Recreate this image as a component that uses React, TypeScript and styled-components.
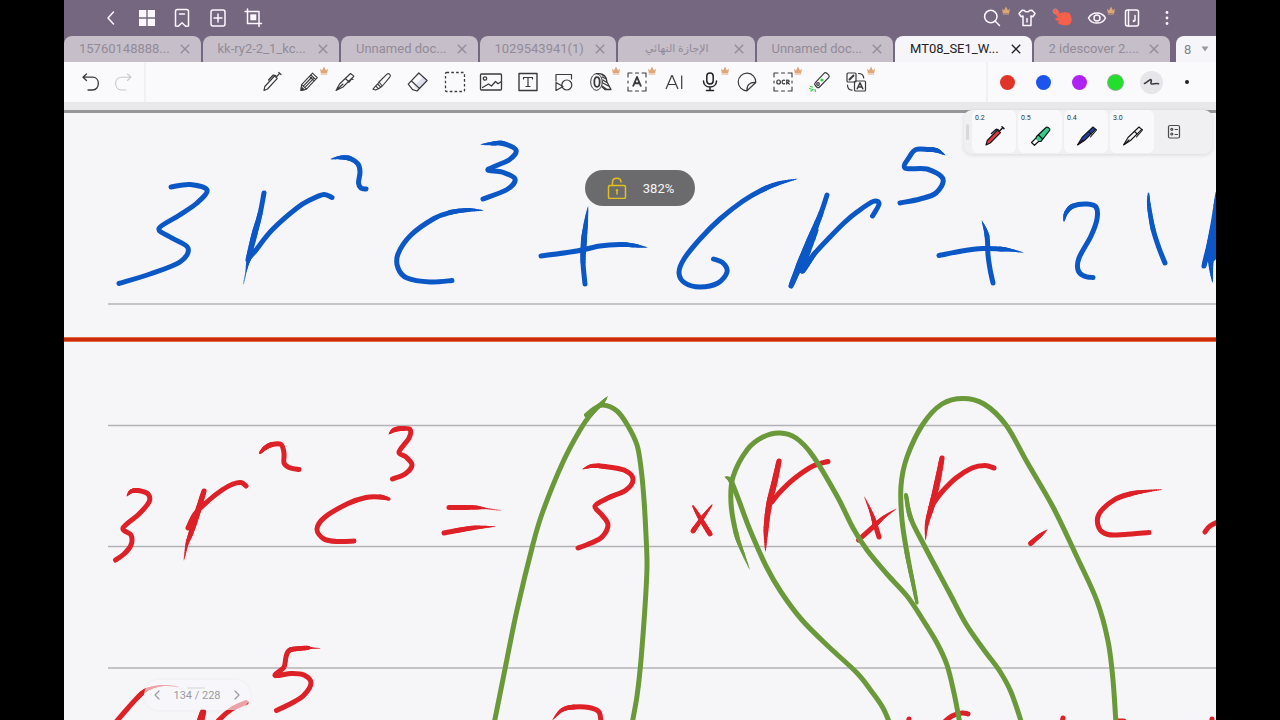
import React from "react";
import styled, { createGlobalStyle } from "styled-components";

const GlobalStyle = createGlobalStyle`
  * { box-sizing: border-box; }
  body { margin: 0; background: #000; font-family: Roboto, "DejaVu Sans", sans-serif; }
  button { border: 0; padding: 0; margin: 0; background: none; font: inherit; color: inherit; cursor: pointer; }
`;

const Shell = styled.main`
  display: flex;
  flex-direction: column;
  height: 100vh;
  margin: 0 5%;
  overflow: hidden;
  background: #f6f6f9;
`;

const TitleBar = styled.header`
  flex: none;
  display: flex;
  justify-content: space-between;
  align-items: center;
  height: 36px;
  padding: 0 33px 0 31px;
  background: #74677f;
  color: #fdf8ff;
`;

const TitleGroup = styled.div<{ $width: number }>`
  display: flex;
  justify-content: space-between;
  width: ${(p) => p.$width}px;
`;

const IconButton = styled.button<{ $tall?: boolean }>`
  position: relative;
  display: flex;
  align-items: center;
  justify-content: center;
  width: 32px;
  height: ${(p) => (p.$tall ? 40 : 36)}px;
`;

const CrownBadge = styled.span<{ $x: number; $y: number }>`
  position: absolute;
  left: ${(p) => p.$x}px;
  top: ${(p) => p.$y}px;
  display: flex;
`;

const TabBar = styled.nav`
  flex: none;
  display: flex;
  gap: 2px;
  height: 26px;
  background: #74677f;
`;

const Tab = styled.div<{ $active?: boolean }>`
  flex: 1 1 0;
  min-width: 0;
  display: flex;
  align-items: center;
  justify-content: space-between;
  padding: 0 10px 0 15px;
  border-radius: 8px 8px 0 0;
  background: ${(p) => (p.$active ? "#f6f5f9" : "#c6bec9")};
  color: ${(p) => (p.$active ? "#222224" : "#938b98")};
`;

const TabTitle = styled.button<{ $small?: boolean }>`
  flex: 1;
  min-width: 0;
  overflow: hidden;
  white-space: nowrap;
  padding-right: ${(p) => (p.$small ? 12 : 0)}px;
  text-align: ${(p) => (p.$small ? "center" : "left")};
  font-size: ${(p) => (p.$small ? 11 : 13)}px;
  line-height: 26px;
`;

const TabClose = styled.button`
  display: flex;
  width: 12px;
  justify-content: center;
`;

const TabCount = styled.button`
  flex: none;
  display: flex;
  align-items: center;
  justify-content: space-between;
  width: 40px;
  margin-left: 4px;
  padding: 0 7px 0 8px;
  border-radius: 8px 0 0 0;
  background: #f6f5f9;
  color: #85838a;
  font-size: 13px;
`;

const Toolbar = styled.div`
  flex: none;
  display: flex;
  height: 40px;
  background: #fafafc;
  color: #3a3a3e;
`;

const History = styled.div`
  display: flex;
  width: 82px;
  padding-left: 11px;
  border-right: 2px solid #f1f1f4;
`;

const Tools = styled.div`
  flex: 1;
  display: flex;
  justify-content: center;
  padding-right: 4px;
`;

const ToolRow = styled.div`
  display: flex;
  justify-content: space-between;
  width: 616px;
`;

const Swatches = styled.div`
  display: flex;
  align-items: center;
  width: 230px;
  padding-left: 1px;
  border-left: 2px solid #f1f1f4;
`;

const SwatchButton = styled.button`
  display: flex;
  align-items: center;
  justify-content: center;
  width: 36px;
  height: 40px;
`;

const Dot = styled.span<{ $color: string; $size?: number; $ring?: string }>`
  width: ${(p) => p.$size ?? 15}px;
  height: ${(p) => p.$size ?? 15}px;
  border-radius: 50%;
  background: ${(p) => p.$color};
  box-shadow: 0 0 0 1px ${(p) => p.$ring ?? "transparent"};
`;

const Squiggle = styled.span`
  display: flex;
  width: 23px;
  height: 23px;
  border-radius: 50%;
  background: #e6e6ea;
`;

const Edge = styled.div`
  flex: none;
  height: 11px;
  border-bottom: 3px solid #96969a;
  background: #e8e8eb;
`;

const Canvas = styled.section`
  position: relative;
  flex: 1;
  min-height: 0;
  overflow: visible;
`;

const Page = styled.svg`
  display: block;
  width: 100%;
`;

const Favorites = styled.div`
  position: absolute;
  top: -3px;
  right: 4px;
  z-index: 1;
  display: flex;
  gap: 2px;
  width: 248px;
  height: 44px;
  padding-left: 8px;
  border-radius: 8px;
  background: #f0f0f3;
  box-shadow: 0 1px 4px rgba(0, 0, 0, 0.12);
`;

const Grip = styled.span`
  position: absolute;
  left: 2px;
  top: 14px;
  width: 3px;
  height: 16px;
  border-radius: 2px;
  background: #d8d8dc;
`;

const PenCard = styled.button`
  display: flex;
  flex-direction: column;
  width: 44px;
  height: 43px;
  padding: 4px 0 0 3px;
  border-radius: 6px;
  background: #f9f9fb;
  color: #333;
  text-align: left;
  font-size: 7px;
  line-height: 8px;

  svg { align-self: center; margin-top: 2px; margin-right: 2px; }
`;

const ListButton = styled.button`
  display: flex;
  align-items: center;
  justify-content: center;
  width: 36px;
  height: 44px;
`;

const ZoomPill = styled.div`
  position: absolute;
  top: 57px;
  left: 50%;
  display: flex;
  align-items: center;
  justify-content: center;
  gap: 15px;
  width: 110px;
  height: 36px;
  margin-left: -55px;
  border-radius: 18px;
  background: #6b6b6d;
  color: #f6f6f6;
  font-size: 13px;
`;

const Pager = styled.div`
  position: absolute;
  left: 80px;
  bottom: 10px;
  display: flex;
  align-items: center;
  justify-content: space-between;
  width: 106px;
  height: 30px;
  padding: 0 6px;
  border-radius: 15px;
  background: rgba(248, 248, 251, 0.6);
  box-shadow: 0 0 4px rgba(0, 0, 0, 0.05);
  color: #9a9a9f;
  font-size: 11px;

  &::before {
    content: "";
    position: absolute;
    top: 7px;
    left: 43px;
    width: 18px;
    height: 2px;
    border-radius: 1px;
    background: #e6e6ea;
  }
  button { display: flex; }
`;

type IconProps = { children: React.ReactNode; w?: number; size?: number; color?: string };
const Icon = ({ children, w = 1.3, size = 24, color = "currentColor" }: IconProps) => (
  <svg width={size} height={size} viewBox={`0 0 ${size} ${size}`} fill="none" stroke={color} strokeWidth={w} strokeLinecap="round" strokeLinejoin="round" aria-hidden="true">
    {children}
  </svg>
);

const Crown = () => (
  <svg width="10" height="9" viewBox="0 0 10 9" aria-hidden="true">
    <path d="M1 2.6 3 4.4 5 .6 7 4.4 9 2.6 8.2 7H1.8zM1.8 7.6h6.4v.9H1.8z" fill="#dfa677" />
  </svg>
);

const Cross = () => (
  <svg width="10" height="10" viewBox="0 0 10 10" stroke="currentColor" strokeWidth="1.3" aria-hidden="true">
    <path d="M.8.8l8.4 8.4M9.2.8.8 9.2" />
  </svg>
);

type Tool = { label: string; icon: React.ReactNode; crown?: boolean };

const titleLeft: Tool[] = [
  { label: "Back", icon: <Icon w={1.5}><path d="M14.5 6 9 12l5.5 6" /></Icon> },
  { label: "Thumbnails", icon: <Icon w={0}><path fill="currentColor" d="M4 4h7.300v7.300H4zM12.700 4H20v7.300h-7.300zM4 12.700h7.300V20H4zM12.700 12.700H20V20h-7.300z" /></Icon> },
  { label: "Bookmarks", icon: <Icon w={1.5}><path d="M5.500 5.500a2 2 0 0 1 2-2h9a2 2 0 0 1 2 2V20l-2.800.2-3.700-3.500-3.700 3.500-2.800-.2zM9.500 8h5" /></Icon> },
  { label: "Add page", icon: <Icon w={1.5}><rect x="5" y="4" width="14" height="16" rx="2" /><path d="M12 8v8M8 12h8" /></Icon> },
  { label: "Crop", icon: <Icon w={1.5}><path d="M4 5.500h14v15M6.500 3v14.500h14" /><path fill="currentColor" stroke="none" d="M9.300 8.300h6v6h-6z" /></Icon> },
];

const titleRight: Tool[] = [
  { label: "Search", crown: true, icon: <Icon w={1.5}><circle cx="10.800" cy="10.500" r="6.200" /><path d="m15.300 15.300 4.200 4.200" /></Icon> },
  { label: "Theme", icon: <Icon w={1.5}><path d="M9.500 4.500 7 4.300 4 7.500l2 3.200 2-.7v9.500h8V10l2 .7 2-3.200-3-3.200-2.500.2c-.6 1.800-4.400 1.800-5 0zM12 12.500v3.500" /></Icon> },
  { label: "Touch mode", icon: <Icon w={0}><path fill="#f5604c" d="M3.800 6.800C2.800 5.200 4.200 3 6.200 3.400c.9.200 1.500.8 2 1.500l1.900 2.600c1-1.200 2.400-1.200 3.300-.8 1-.9 2.400-.8 3.300 0 1.300-.4 2.600.1 3.200 1.300 1.200 1.900 1.900 4 1.700 6.200-.2 2.700-1.700 4.700-4.400 5-3 .4-6-.2-8.500-1.400-1.300-.7-.9-2.400.6-2.400-1.400-.2-2.800-.6-3.600-1.300-1-.9-.2-2.400 1.100-2.200l1.500.2z" /><circle cx="5.400" cy="5.200" r="2.300" fill="none" stroke="#d08a8c" strokeWidth=".9" /></Icon> },
  { label: "View", crown: true, icon: <Icon w={1.5}><path d="M3.500 12c3.400-6.800 13.600-6.800 17 0-3.400 6.800-13.600 6.800-17 0z" /><circle cx="12" cy="12" r="3" /></Icon> },
  { label: "Music sheet", icon: <Icon w={1.5}><rect x="5.500" y="4" width="13" height="16" rx="2" /><path d="M8.500 4v16M15 9.500v5" /><circle cx="13.800" cy="15" r="1.200" fill="currentColor" stroke="none" /></Icon> },
  { label: "More", icon: <Icon w={0}><g fill="currentColor"><circle cx="12" cy="6.500" r="1.400" /><circle cx="12" cy="12" r="1.400" /><circle cx="12" cy="17.500" r="1.400" /></g></Icon> },
];

const Corners = () => <path d="M3 7V3h4M17 3h4v4M21 17v4h-4M7 21H3v-4M10.500 3h3M10.500 21h3M3 11v2M21 11v2" strokeWidth="1.100" />;

const tools: Tool[] = [
  { label: "Ballpoint", icon: <Icon w={1.200}><path d="M4 20.500 4.800 16.500 14.500 6l2.800 2.400L7.500 19zM16.200 7l3-3.200M18.800 2.500l2.200 2M8.500 10l4.700-5 2.600.5" /></Icon> },
  { label: "Pencil", crown: true, icon: <Icon w={1.100}><path d="m4 20.500.6-5.800L15.500 3.200l4.800 4.500L9.500 19.200zM13.800 5l4.800 4.500M12.500 6.300l4.800 4.500M4.600 14.700l4.900 4.500M6.300 16.200l8.300-8.700M7.800 17.600l8.400-8.700" /><path d="m4 20.500.3-3.500 3 2.800z" fill="currentColor" /></Icon> },
  { label: "Fountain pen", icon: <Icon w={1.100}><path d="m3 20.500 3.500-6.500L17.500 3.500l3.400 2.600L10 17zM4 19.500l6-5.500M12.300 8.500l3.400 3M20.900 6.100l-5 6.400M18.500 9l1.500.5" /></Icon> },
  { label: "Highlighter", icon: <Icon w={1.100}><path d="m9 12 8-7.800c.9-.8 2-.6 2.800.1.700.8.700 1.900 0 2.800L12.300 16zM9 12l-1.300 2 3 3.200 1.600-1.200M7.700 14l-2 1.800 2.800 3 2.200-1.600M5.700 15.800 3 19.200l2.600.9 2.900-1.300" /></Icon> },
  { label: "Eraser", icon: <Icon w={1.200}><path d="m17.500 6.500 4 3.800-9.300 10L8 16z" fill="#dfe0ee" stroke="none" /><path d="m2.200 14.200 10.600-11.200 8.300 7.500-10 10.500-4.500-1.300zM5.500 11l7.900 7.400" /></Icon> },
  { label: "Select", icon: <Icon w={1.300}><rect x="2.500" y="2.500" width="19" height="19" rx="1" strokeDasharray="2.600 2.200" strokeLinecap="butt" /></Icon> },
  { label: "Image", icon: <Icon w={1.300}><rect x="1.500" y="4" width="21" height="16" rx="1" /><circle cx="6" cy="8.500" r="1.700" /><path d="m3.500 17.500 6-3.500 3 2 4-4.500 2.500 2.200 3.500-2.200" /></Icon> },
  { label: "Text box", icon: <Icon w={1.400}><rect x="3" y="3.500" width="18" height="17" /><path d="M7.500 9V7.500h9V9M12 7.500v9M10 16.500h4" strokeWidth="1.200" /></Icon> },
  { label: "Shapes", icon: <Icon w={1.200}><path d="M4 11V4.500h15.500V9M4 12.500v8l7-4z" /><circle cx="14.800" cy="15" r="5" /></Icon> },
  { label: "Tape", crown: true, icon: <Icon w={1}><ellipse cx="7.500" cy="12" rx="5.800" ry="8.300" /><ellipse cx="8" cy="12" rx="2.700" ry="4.800" strokeWidth="1.800" /><path d="M7.500 3.700c7.500-1 10 3 10.500 8.300l4 7.500h-6l-2.500-2.300M12 4l3 2M13.300 7l4 2M13.800 10l4.200 2.500M13.800 13l5.700 3M13 16l5 3.500" strokeWidth="1.300" /></Icon> },
  { label: "Text recognition", crown: true, icon: <Icon><Corners /><path d="m8 16.500 4-9.500 4 9.500M9.400 13.300h5.200" strokeWidth="1.900" strokeLinecap="butt" /></Icon> },
  { label: "AI", icon: <Icon w={1.200}><path d="m4 19 5.800-13.500h.4L16 19M6 14.500h8M19.700 5.500V19" strokeLinecap="butt" /></Icon> },
  { label: "Record", crown: true, icon: <Icon w={1.500} color="#222225"><rect x="8.800" y="3" width="6.400" height="11" rx="3.200" /><path d="M5.500 11c0 8 13 8 13 0M12 17v3.500M8.500 20.500h7" /></Icon> },
  { label: "Sticker", icon: <Icon w={1.200}><path d="M20.800 12.500A8.800 8.800 0 1 0 12 20.800M20.800 12.500 12 20.800c-.5-5.500 2.500-8.800 8.800-8.300z" /></Icon> },
  { label: "OCR", crown: true, icon: <Icon><Corners /><g strokeWidth="1.200"><ellipse cx="7.600" cy="12" rx="1.800" ry="2" /><path d="M13.600 10.400c-3.300-1.200-3.300 4.400 0 3.200M15.700 14.100v-4c3.200-.3 3.200 2.300 0 2.200l2.600 1.800" /></g></Icon> },
  { label: "Laser", icon: <Icon w={1.200}><path d="M7.300 12.700 16 3.300c1-1 2-.6 2.800 0l1.800 1.600c.9.900.8 2 0 2.800L11.500 17c-1 1-2 .8-2.800 0l-1.400-1.500c-.9-.9-.8-2 0-2.800z" /><circle cx="10" cy="14" r="1.300" /><circle cx="14" cy="10" r="1" fill="#35cf45" stroke="#35cf45" /><path d="m2.500 16.500 2 .5M3 21l2-1.800M7 19.500l.5 2M1.500 18.500l1.500.5" stroke="#35cf45" /></Icon> },
  { label: "Translate", crown: true, icon: <Icon w={1.200}><rect x="3" y="3" width="9" height="9" rx="1" /><path d="m5.500 9.500 4-4" strokeWidth="1.900" /><rect x="10.500" y="11" width="11" height="10" rx="1" /><path d="m13.200 18.800 2.800-6 2.800 6M14.200 17h3.600" strokeWidth="1.500" /><path d="M14.500 3.500c3 0 5 1.500 5.200 4.500M3.500 15c0 3 1.500 5 4.500 5.200" /></Icon> },
];

const tabs = ["15760148888...", "kk-ry2-2_1_kc...", "Unnamed doc...", "1029543941(1)", "الإجازة النهائي", "Unnamed doc...", "MT08_SE1_W...", "2 idescover 2...."];

const BallPen = ({ fill }: { fill: string }) => (
  <Icon w={1.200} color="#16161a"><path d="M3 21 4.300 16.500 14.500 6l3 2.700L7.200 19z" fill={fill} /><path d="m16.500 7 3-3M19 2.800l2 1.800M8.500 9.500l4.800-4.200 2 .6" strokeWidth="1.500" /></Icon>
);
const Marker = () => (
  <Icon w={1.200} color="#16161a"><path d="m7.500 12.500 9.500-9c1-1 4.500.6 3.800 2.600L12 17.300l-3.500.2-2-2z" fill="#31cf8a" /><path d="m6.500 14.500-4 4 3 2.800 4-3.800" fill="#fff" /><path d="m9.500 11 4 4" /></Icon>
);
const Nib = ({ fill }: { fill: string }) => (
  <Icon w={1.100} color="#16161a"><path d="m2.500 21 4.500-7.500L18 3l2.800 2.300L9.500 16.500z" fill={fill} /><path d="m3 20.500 5-4.700M20.800 5.300l.7.7-6 7M13.500 7.500l2.800 2.500" /></Icon>
);
const favorites = [
  { size: "0.2", icon: <BallPen fill="#e23b40" /> },
  { size: "0.5", icon: <Marker /> },
  { size: "0.4", icon: <Nib fill="#223f9b" /> },
  { size: "3.0", icon: <Nib fill="#f5f5f7" /> },
];

/* Ink strokes: lists of [x, y, nib width], smoothed through every point. */
type Pt = [number, number, number?];
const NIB = 5;

const blue: Pt[][] = [
  [[171, 187], [190, 184.500], [207, 190], [197, 203], [178, 216], [159, 228.500], [171, 237.500], [188, 248], [180, 262], [150, 274], [119, 283.500]],
  [[264, 193], [260, 214], [254, 236, 6], [248, 260, 5]],
  [[243.500, 284, 0.300], [246, 272, 1], [249, 259, 4], [256, 250], [272, 230], [297, 208], [312, 199], [324, 194.500], [332, 197.500]],
  [[331, 159, 0.300], [341, 157.500, 4], [350, 158.500], [358, 164], [360, 172], [358.500, 183], [361, 188], [366, 189]],
  [[483, 210.500, 0.300], [468, 210, 4], [450, 212.500], [434, 218.500], [411, 235], [398, 254], [398, 268], [407, 278], [430, 282], [452, 280.500]],
  [[481, 144.500, 0.300], [493, 143.500, 4], [503, 143.500], [516, 150], [509, 160], [488, 169.500], [502, 172], [515, 179], [507, 189.500], [483, 199]],
  [[541, 256], [577, 251], [600, 246], [620, 244.500], [634, 245.500, 4], [647, 247.500, 0.300]],
  [[588, 207, 0.300], [586, 222, 4], [584, 240, 6], [583, 262, 5], [585, 284]],
  [[797, 179, 0.300], [778, 183.500, 4], [762, 190], [743, 201], [720, 219], [700, 239], [684, 259], [679, 273], [685, 283], [700, 287], [718, 283], [727, 272], [723, 263], [713.500, 259]],
  [[827, 195], [821, 213], [810, 240, 7], [800, 264, 7], [791, 286, 5]],
  [[816, 230, 5], [802, 270, 6], [815, 253, 5], [830, 237], [845, 222], [857, 212], [873, 201.500], [879, 204], [872.500, 216]],
  [[945, 155, 0.300], [937, 150.500, 4.500], [928, 149.500], [916, 149.500], [910, 156], [905, 168], [927, 169], [943, 179], [936, 193], [920, 199], [900, 203]],
  [[939, 255.500], [962, 251], [983, 248.500], [1000, 249], [1010, 250, 3], [1023, 252.500, 0.300]],
  [[982, 221, 0.300], [987, 236, 5], [988, 255], [990, 269], [993, 283]],
  [[1064, 221, 1], [1066, 213, 4], [1073, 206], [1087, 204], [1096, 207], [1097, 219], [1091, 236], [1079, 258], [1078, 270], [1084, 276], [1093, 277.500]],
  [[1148.500, 193, 1], [1149, 206, 4], [1153, 229], [1159, 248], [1165, 263]],
  [[1217, 193, 3], [1212, 232, 6], [1204, 266, 5]],
  [[1217, 226, 6], [1211, 258, 6], [1212.500, 282, 0.500]],
  [[1218, 236, 8], [1213, 258, 6]],
];

const red: Pt[][] = [
  [[127, 496, 0.500], [131, 491.500, 4], [138, 490.500], [148, 494], [149, 502], [139, 514], [123, 528], [131, 535], [131, 545], [124, 554], [115.500, 560]],
  [[204, 491], [197, 514, 6], [191, 533, 5], [187, 544, 3], [184, 560, 0.300]],
  [[188, 528], [195, 514], [208, 501], [222, 490], [233, 484], [241, 482.500], [246, 486]],
  [[260, 453, 2], [265, 448, 4.500], [272, 444.500], [281, 444.500], [284, 453], [284, 463], [289, 467.500], [299, 469.500]],
  [[389, 434, 0.500], [394, 430, 4.500], [402, 428.500], [410, 429.500], [409, 438], [399, 452], [406, 457], [412, 465], [405, 474], [392.500, 479]],
  [[389, 499, 3], [380, 497, 5], [366, 497.500], [348, 503.500], [325, 517], [317, 529], [324, 539], [338, 541.500], [354, 541]],
  [[449, 507.500], [462, 507.500], [476, 507.500, 4], [486, 508.500, 1.200], [501, 510.500, 0.200]],
  [[444, 533], [457, 530.500], [472, 528, 4.500], [484, 527, 2.500], [495, 526.500, 0.300]],
  [[320, 648.500, 0.300], [311, 648, 1.500], [306, 648, 4.500], [290, 650], [286, 657], [284, 667], [275, 675.500], [291, 673.500], [304, 675], [311, 683], [304, 695], [292, 703], [276.500, 710.500]],
  [[179, 687, 0.300], [164, 685.500, 1], [148, 689, 3], [139, 696, 5], [128, 708], [116, 722]],
  [[203, 712, 6], [199, 726, 8]],
  [[246, 702.500], [232, 709], [219, 720], [212, 730]],
  [[583, 469, 0.500], [592, 466, 4], [605, 466.500], [624, 470], [633, 479], [626, 490], [608, 498], [595, 506], [602, 515], [608, 525], [602, 537], [591, 543], [578, 548]],
  [[693, 506, 1.500], [700, 518, 4.500], [710, 534]],
  [[712, 505, 1], [703, 517, 4], [693, 531]],
  [[779, 461], [775, 480, 6], [769, 505, 6], [766, 530, 5], [765.500, 551, 0.300]],
  [[772, 502], [780, 492], [795, 478], [813, 466], [828, 461.500]],
  [[552.500, 720, 0.300], [562, 710, 4], [574, 707], [589, 707.500], [599, 712], [601, 724]],
  [[864.500, 497, 0.300], [871, 512, 3], [875, 524, 5], [879, 537]],
  [[896, 509, 0.300], [884, 517, 3], [874, 526, 5], [858.500, 540]],
  [[942, 458], [938, 479, 6], [932, 505, 6], [927, 523, 4], [925.500, 540, 0.300]],
  [[931, 507], [941, 493], [956, 478], [972, 468], [985, 465.500], [994, 468]],
  [[1030.500, 543.500], [1040, 535.500, 4], [1047, 530, 0.300]],
  [[1162, 489.500, 0.300], [1144, 491.500, 3], [1130, 494, 5], [1114, 500], [1099, 514], [1099, 528], [1108, 534.500], [1125, 534.500], [1149, 532.500]],
  [[1205, 532], [1210, 526], [1220, 521]],
  [[909, 719], [907, 728]],
  [[942, 724], [952, 716], [962, 713], [968, 714]],
  [[1063, 718], [1061, 728]],
  [[1117, 721], [1124, 721]],
  [[1212, 719], [1211, 728]],
];

const green: Pt[][] = [
  [[586.500, 415], [594, 409], [603, 405], [617, 411], [628, 426], [637, 445], [641, 468], [644, 500], [646, 535], [647, 567], [645, 607], [641, 660], [637, 696], [632, 724]],
  [[607.500, 396.500, 0.300], [602, 403, 4], [591, 414], [580, 430], [563, 462], [543, 511], [533, 544], [517, 610], [507, 659], [494, 724]],
  [[749.500, 569, 0.300], [743, 553, 3], [736, 533, 5], [731, 503], [733, 477], [747, 450], [763, 437], [780, 433], [796, 438], [813, 456], [837, 496], [853, 528], [867, 550], [886, 573], [907, 596], [923, 620], [937, 643], [947, 665], [954, 693], [960, 724]],
  [[725, 477, 0.300], [731, 481, 5], [738, 498], [750, 530], [766, 566], [781, 592], [802, 620], [829, 647], [857, 673], [872, 692], [883, 708], [890, 724]],
  [[917, 603, 3], [914, 588, 4], [907, 553], [902, 520], [901, 486], [907, 457], [923, 424], [942, 404], [963, 398.500], [984, 404], [1006, 425], [1027, 462], [1053, 507], [1077, 557], [1097, 601], [1108, 641], [1113, 680], [1116, 724]],
  [[906, 495, 4], [911, 519], [925, 547], [949, 592], [966, 624], [984, 650], [999, 670], [1011, 692], [1022, 724]],
];

const r1 = (n: number) => Math.round(n * 10) / 10;

function Stroke({ points }: { points: Pt[] }) {
  let path = "";
  const tapers: React.ReactNode[] = [];
  for (let i = 0; i < points.length - 1; i++) {
    const p0 = points[Math.max(i - 1, 0)];
    const p1 = points[i];
    const p2 = points[i + 1];
    const p3 = points[Math.min(i + 2, points.length - 1)];
    const w1 = p1[2] ?? NIB;
    const w2 = p2[2] ?? NIB;
    const c1 = [p1[0] + (p2[0] - p0[0]) / 6, p1[1] + (p2[1] - p0[1]) / 6];
    const c2 = [p2[0] - (p3[0] - p1[0]) / 6, p2[1] - (p3[1] - p1[1]) / 6];
    if (w1 === NIB && w2 === NIB) {
      path += `M${p1[0]} ${p1[1]}C${r1(c1[0])} ${r1(c1[1])} ${r1(c2[0])} ${r1(c2[1])} ${p2[0]} ${p2[1]}`;
      continue;
    }
    const at = (t: number, k: 0 | 1) => {
      const u = 1 - t;
      return r1(u * u * u * p1[k] + 3 * u * u * t * c1[k] + 3 * u * t * t * c2[k] + t * t * t * p2[k]);
    };
    const steps = 8;
    for (let s = 0; s < steps; s++) {
      const a = s / steps;
      const b = (s + 1) / steps;
      tapers.push(
        <path key={`${i}-${s}`} d={`M${at(a, 0)} ${at(a, 1)}L${at(b, 0)} ${at(b, 1)}`} strokeWidth={w1 + (w2 - w1) * (a + b) / 2} />
      );
    }
  }
  return <g><path d={path} strokeWidth={NIB} />{tapers}</g>;
}

const Ink = ({ color, strokes }: { color: string; strokes: Pt[][] }) => (
  <g fill="none" stroke={color} strokeLinecap="round" strokeLinejoin="round">
    {strokes.map((s, i) => <Stroke key={i} points={s} />)}
  </g>
);

const TitleButtons = ({ items, width }: { items: Tool[]; width: number }) => (
  <TitleGroup $width={width}>
    {items.map((t) => (
      <IconButton key={t.label} aria-label={t.label}>
        {t.icon}
        {t.crown && <CrownBadge $x={25} $y={6}><Crown /></CrownBadge>}
      </IconButton>
    ))}
  </TitleGroup>
);

export default function App() {
  return (
    <>
      <GlobalStyle />
      <Shell>
        <TitleBar>
          <TitleButtons items={titleLeft} width={174} />
          <TitleButtons items={titleRight} width={207} />
        </TitleBar>
        <TabBar aria-label="Open documents">
          {tabs.map((title, i) => (
            <Tab key={i} $active={i === 6}>
              <TabTitle $small={i === 4}>{title}</TabTitle>
              <TabClose aria-label={`Close ${title}`}><Cross /></TabClose>
            </Tab>
          ))}
          <TabCount aria-label="All tabs">
            8
            <svg width="8" height="6" viewBox="0 0 8 6" aria-hidden="true"><path d="M.5.5h7L4 5.500z" fill="#9c9aa0" /></svg>
          </TabCount>
        </TabBar>
        <Toolbar>
          <History>
            <IconButton $tall aria-label="Undo"><Icon w={1.300}><path d="M7.500 4 4 7.200l3.500 3.300M4 7.200h9.500c7.800 0 7.800 12.800 0 12.800H9" /></Icon></IconButton>
            <IconButton $tall aria-label="Redo"><Icon w={1.100} color="#c8c8cd"><path d="M16.500 4 20 7.200l-3.500 3.300M20 7.200h-9.500c-7.800 0-7.800 12.800 0 12.800H15" /></Icon></IconButton>
          </History>
          <Tools>
            <ToolRow>
              {tools.map((t) => (
                <IconButton key={t.label} $tall aria-label={t.label}>
                  {t.icon}
                  {t.crown && <CrownBadge $x={26} $y={4}><Crown /></CrownBadge>}
                </IconButton>
              ))}
            </ToolRow>
          </Tools>
          <Swatches>
            <SwatchButton aria-label="Red"><Dot $color="#df3426" /></SwatchButton>
            <SwatchButton aria-label="Blue"><Dot $color="#1c54ee" /></SwatchButton>
            <SwatchButton aria-label="Purple"><Dot $color="#ae22f2" /></SwatchButton>
            <SwatchButton aria-label="Green"><Dot $color="#22df2c" $ring="#8fae93" /></SwatchButton>
            <SwatchButton aria-label="Line style">
              <Squiggle><Icon w={1.600} size={23}><path d="M4.500 12.500c3-1.200 5-4.300 6.500-3.800 1.500.6-1.500 3.700.6 4.300 1.500.4 4-1 6.900-.3" /></Icon></Squiggle>
            </SwatchButton>
            <SwatchButton aria-label="Line width"><Dot $color="#222" $size={4} /></SwatchButton>
          </Swatches>
        </Toolbar>
        <Edge />
        <Canvas>
          <Page viewBox="64 113 1152 607" role="img" aria-label="Handwritten algebra notes">
            <path d="M108 304h1108M108 425.500h1108M108 546.500h1108M108 668h1108" stroke="#b2b3b8" strokeWidth="1.600" />
            <path d="M64 339.500h1152" stroke="#e9805f" strokeWidth="5" />
            <path d="M64 339.500h1152" stroke="#cb2b08" strokeWidth="3.400" />
            <Ink color="#0c57c6" strokes={blue} />
            <Ink color="#de2027" strokes={red} />
            <Ink color="#6a993a" strokes={green} />
          </Page>
          <Favorites>
            <Grip />
            {favorites.map((f) => (
              <PenCard key={f.size} aria-label={`Pen ${f.size}`}>{f.size}{f.icon}</PenCard>
            ))}
            <ListButton aria-label="Pen list">
              <Icon w={1.200} size={16} color="#4a4a4e"><rect x="2.500" y="1.500" width="11" height="12.500" rx="1.500" /><path d="M9 5.500h2.500M9 10.500h2.500" /><circle cx="5.800" cy="5.300" r="1" /><circle cx="5.800" cy="10" r="1" /></Icon>
            </ListButton>
          </Favorites>
          <ZoomPill>
            <Icon w={1.500} size={22} color="#e3c01c"><rect x="2.500" y="8.500" width="17" height="13" rx="1.500" /><path d="M6.500 8.500V5c0-5 8.500-5 8.500 0M11 13v4M10.300 13h1.400" /></Icon>
            <span>382%</span>
          </ZoomPill>
          <Pager>
            <button aria-label="Previous page"><Icon w={1.200} size={14}><path d="M9 3 5 7l4 4" /></Icon></button>
            <span>134 / 228</span>
            <button aria-label="Next page"><Icon w={1.200} size={14}><path d="m5 3 4 4-4 4" /></Icon></button>
          </Pager>
        </Canvas>
      </Shell>
    </>
  );
}
